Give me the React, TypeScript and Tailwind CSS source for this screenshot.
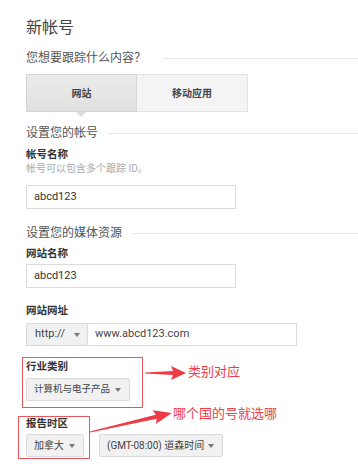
const font = "font-['Roboto','Noto_Sans_CJK_SC',sans-serif]"

function Caret() {
  return <span className="inline-block w-0 h-0 border-l-[3.5px] border-r-[3.5px] border-t-[4px] border-l-transparent border-r-transparent border-t-[#777]" />
}

function SectionTitle({ text, gap }: { text: string; gap: string }) {
  return (
    <div className="flex items-center h-4 leading-4 text-[12px] text-[#555]">
      <span>{text}</span>
      <div className={`flex-1 h-px bg-[#e6e6e6] ${gap}`} />
    </div>
  )
}

function Label({ text }: { text: string }) {
  return <div className="text-[10.5px] leading-[14px] font-bold text-[#333]">{text}</div>
}

function Select({ text, className }: { text: string; className: string }) {
  return (
    <div className={`h-[23px] flex items-center justify-between pl-[7px] pr-[8px] bg-[#f1f1f1] border border-[#dadada] rounded-[2px] text-[#444] ${className}`}>
      <span>{text}</span>
      <Caret />
    </div>
  )
}

export default function App() {
  return (
    <div className={`relative w-[358px] h-[468px] overflow-hidden bg-white pl-[26px] ${font}`}>
      <div className="pt-[18px] text-[16px] leading-5 text-[#444]">新帐号</div>

      <div className="mt-[12px]">
        <SectionTitle text="您想要跟踪什么内容？" gap="ml-[17px]" />
      </div>

      <div className="mt-[8px] flex w-[222px] h-[38px] text-[10px] font-bold text-[#444]">
        <div className="w-[111px] flex items-center justify-center bg-gradient-to-b from-[#ececec] to-[#e0e0e0] border border-[#d6d6d6]">网站</div>
        <div className="w-[111px] flex items-center justify-center bg-[#f4f4f4] border border-l-0 border-[#e2e2e2]">移动应用</div>
      </div>
      <div className="h-[5px] pl-[50px]">
        <div className="w-0 h-0 border-l-[5px] border-r-[5px] border-t-[5px] border-l-transparent border-r-transparent border-t-[#dcdcdc]" />
      </div>

      <div className="mt-[8px]">
        <SectionTitle text="设置您的帐号" gap="ml-[10px]" />
      </div>
      <div className="mt-[7px]">
        <Label text="帐号名称" />
      </div>
      <div className="text-[10px] leading-[13px] text-[#aaa]">帐号可以包含多个跟踪 ID。</div>
      <div className="mt-[10px] w-[210px] h-[24px] flex items-center pl-[7px] border border-[#dcdcdc] text-[11px] text-[#333]">abcd123</div>

      <div className="mt-[16px]">
        <SectionTitle text="设置您的媒体资源" gap="ml-[11px]" />
      </div>
      <div className="mt-[6px]">
        <Label text="网站名称" />
      </div>
      <div className="mt-[3px] w-[210px] h-[24px] flex items-center pl-[7px] border border-[#dcdcdc] text-[11px] text-[#333]">abcd123</div>

      <div className="mt-[16px]">
        <Label text="网站网址" />
      </div>
      <div className="mt-[5px] flex w-[271px] h-[23px] text-[11px]">
        <div className="w-[62px] flex items-center gap-[9px] pl-[8px] bg-[#f1f1f1] border border-[#dadada] text-[#444]">
          <span>http://</span>
          <Caret />
        </div>
        <div className="flex-1 flex items-center pl-[7px] border border-l-0 border-[#dcdcdc] text-[#444]">www.abcd123.com</div>
      </div>

      <div className="mt-[11px] -ml-[4px] w-[121px] pl-[3px] pt-[2px] pb-[6px] border border-[#e8555c]">
        <Label text="行业类别" />
        <Select text="计算机与电子产品" className="mt-[4px] w-[104px] text-[9.5px]" />
      </div>

      <div className="mt-[8px] flex items-end">
        <div className="-ml-[8px] w-[72px] pl-[7px] pb-[1px] border border-[#e8555c]">
          <Label text="报告时区" />
          <Select text="加拿大" className="mt-[3px] w-[58px] text-[10px]" />
        </div>
        <Select text="(GMT-08:00) 道森时间" className="ml-[9px] mb-[2px] w-[124px] text-[10px]" />
      </div>

      {/* annotations */}
      <svg className="absolute left-0 top-0" width="358" height="468" viewBox="0 0 358 468">
        <g transform="translate(145 373)">
          <polygon points="0,-0.6 28,-2 26,-7 41,0 26,7 28,2 0,0.6" fill="#ef3b46" />
        </g>
        <g transform="translate(90 432) rotate(-13)">
          <polygon points="0,-0.6 68,-2 66,-7 84,0 66,7 68,2 0,0.6" fill="#ef3b46" />
        </g>
      </svg>
      <div className="absolute left-[188px] top-[364px] text-[13px] leading-4 text-[#ec3d48]">类别对应</div>
      <div className="absolute left-[173px] top-[406px] text-[13px] leading-4 text-[#ec3d48]">哪个国的号就选哪</div>
    </div>
  )
}
